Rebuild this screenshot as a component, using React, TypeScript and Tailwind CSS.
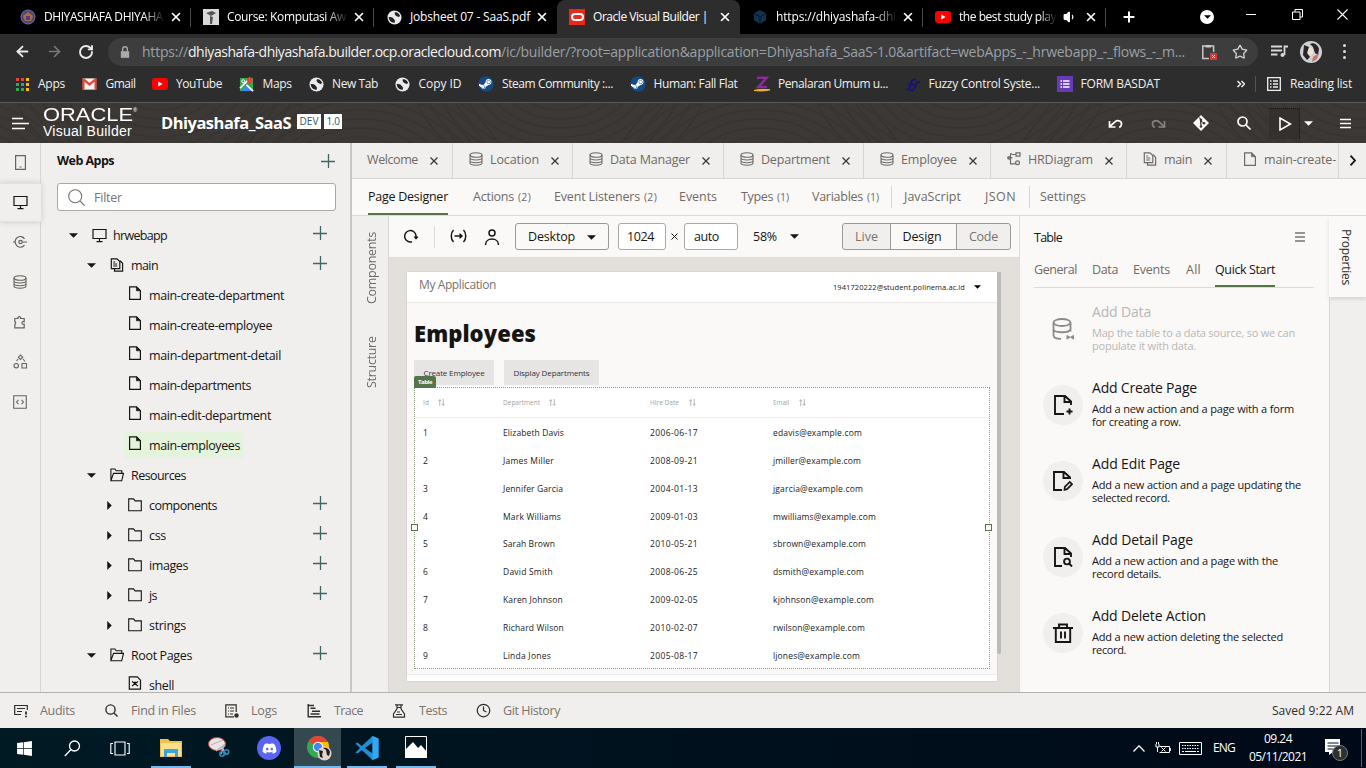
import { useLayoutEffect, useRef, type ReactNode } from 'react';
import { ArrowLeft, ArrowRight, RotateCw, Star, X, Plus, Clock, Volume1 } from 'lucide-react';
import { FaDiscord, FaWindows, FaSteam } from 'react-icons/fa';

/* Text run that spreads its letters so that it fills the given width. */
function T({ w, children, className = '', stretch = false }: { w?: number; children: ReactNode; className?: string; stretch?: boolean }) {
  const ref = useRef<HTMLSpanElement>(null);
  useLayoutEffect(() => {
    const el = ref.current;
    if (!el || !w) return;
    const natural = el.getBoundingClientRect().width;
    const n = (el.textContent || '').length;
    if (stretch) el.style.transform = `scaleX(${w / natural})`;
    else el.style.letterSpacing = `${(w - natural) / n}px`;
  }, [w, stretch]);
  return (
    <span className={`block shrink-0 whitespace-pre ${className}`} style={w ? { width: w } : undefined}>
      <span ref={ref} className="inline-block origin-left">{children}</span>
    </span>
  );
}

type IP = { className?: string };
const Svg = ({ children, className = '', vb = '0 0 16 16', sw = 1.2 }: { children: ReactNode; className?: string; vb?: string; sw?: number }) => (
  <svg viewBox={vb} className={`shrink-0 ${className}`} fill="none" stroke="currentColor" strokeWidth={sw}>{children}</svg>
);
const PageIcon = ({ className = 'size-[14px]' }: IP) => (
  <Svg className={className} vb="0 0 14 14"><path d="M1.600.8h7l3.800 3.900v8.600H1.600z" /><path d="M8.400.8v4h4z" fill="currentColor" strokeWidth=".6" /></Svg>
);
const FlowIcon = ({ className = 'size-[14px]' }: IP) => (
  <Svg className={className} vb="0 0 14 14"><path d="M1.300.8h5.700L9.800 3.600v7H1.300zM3.200 4h2M3.200 6h4M3.200 8h4" /><path d="M10 2.800l2.600 2.500v7.900H4.500v-2.400" /></Svg>
);
const FolderIcon = ({ className = 'size-[14px]' }: IP) => (
  <Svg className={className} vb="0 0 14 14" sw={1.1}><path d="M.7 12.800V.9h4.800l1.600 2h6.200v9.900z" /></Svg>
);
const FolderOpen = ({ className = 'size-[14px]' }: IP) => (
  <Svg className={className} vb="0 0 14 14" sw={1.1}><path d="M.9 12.600V1h4l1.300 1.800h5.600v2.400M.9 12.800l2.600-7.400h10l-1.800 7.400z" /></Svg>
);
const ShellIcon = ({ className = 'size-[14px]' }: IP) => (
  <Svg className={className} vb="0 0 14 14"><path d="M1.300.8h8l3.200 3.400v9H1.300z" /><path d="M4 5.500l6 4.500M10 5.500L4 10M7 5.500v2.500" strokeWidth="1.200" /></Svg>
);
const MonitorIcon = ({ className = 'size-[15px]' }: IP) => (
  <Svg className={className} vb="0 0 15 15"><path d="M1 1.500h13v9H1zM4.500 13.600h6M7.500 10.500v3" /></Svg>
);
const DbIcon = ({ className = 'size-[14px]' }: IP) => (
  <Svg className={className} vb="0 0 14 14" sw={1.1}><ellipse cx="7" cy="3" rx="6" ry="2.300" /><path d="M1 3v8c0 3 12 3 12 0V3M1 5.800c0 2.900 12 2.900 12 0M1 8.500c0 2.900 12 2.900 12 0" /></Svg>
);
const DiagramIcon = ({ className = 'size-[14px]' }: IP) => (
  <Svg className={className} vb="0 0 14 14"><path d="M5 1.800H3.500v10H6M1 5.800h4.500M9 .8h4v3.400H9zM5 2.500h4" /><circle cx="2" cy="5.800" r="1.300" /><circle cx="10.500" cy="10.700" r="1.900" /><path d="M6 11.800h2.600" /></Svg>
);
const CaretDown = ({ className = 'h-[5px] w-[9px]' }: IP) => (
  <svg viewBox="0 0 10 5" className={`shrink-0 fill-current ${className}`}><path d="M0 0h10L5 5z" /></svg>
);
const CaretRight = () => <svg viewBox="0 0 5 10" className="h-[9px] w-[5px] shrink-0 fill-current"><path d="M0 0v10l5-5z" /></svg>;
const PlusIcon = ({ className = '' }: IP) => (
  <Svg className={`size-[14px] text-[#3f6663] ${className}`} vb="0 0 14 14" sw={1.3}><path d="M7.500 0v14M0 7.500h14" /></Svg>
);
const YouTube = () => <svg viewBox="0 0 16 12" className="h-[12px] w-[16px]"><rect width="16" height="12" rx="3" fill="#f00" /><path d="M6.300 3.500v5L10.600 6z" fill="#fff" /></svg>;
const GlobeIcon = () => (
  <svg viewBox="0 0 16 16" className="size-[15px]"><circle cx="8" cy="8" r="7.500" fill="#e8eaed" /><path d="M1.800 7.500c3-.5 4.200.3 5.200 1.800 1 1.400 2 1.500 1.200 4.200C5 14 2 11.500 1.800 7.500zM8.500 2.500c2-.8 5 1.500 5.500 4-1.500 1.800-3 .2-4-.2C8.500 5.500 7.500 4 8.500 2.500z" fill="#222" /></svg>
);

function Tab({ icon, title, w, active, sep, audio, fade }: { icon: ReactNode; title: string; w: number; active?: boolean; sep?: boolean; audio?: boolean; fade?: boolean }) {
  return (
    <div className={`relative flex h-[34px] w-[183px] shrink-0 items-center pl-[12px] text-white ${active ? 'rounded-t-[8px] bg-[#2d2d2d]' : ''}`}>
      <div className="flex size-4 shrink-0 items-center justify-center">{icon}</div>
      <div className={`ml-2 ${audio ? 'w-[98px]' : 'w-[121px]'} ${fade ? '[mask-image:linear-gradient(to_right,black_82%,transparent)]' : ''}`}>
        <T w={w} className="text-[12px] leading-[18px]">{title}</T>
      </div>
      {audio && <Volume1 className="ml-[6px] size-[14px] fill-white" />}
      <X className={`size-[14px] shrink-0 ${audio ? 'ml-[7px]' : 'ml-[4px]'}`} strokeWidth={2.8} />
      {sep && <div className="absolute top-[8px] right-0 h-[19px] w-px bg-[#4a4a4a]" />}
    </div>
  );
}

function SteamIcon() {
  return (
    <div className="flex size-4 items-center justify-center rounded-full bg-radial from-white from-60% to-transparent to-62%">
      <FaSteam className="size-[16px] shrink-0 text-[#134a86]" />
    </div>
  );
}

const bookmarks: { t: string; w: number; i: ReactNode }[] = [
  { t: 'Apps', w: 27, i: (
    <div className="grid grid-cols-3 gap-[2px]">
      <i className="size-[3px] bg-[#ea4335]" /><i className="size-[3px] bg-[#ea4335]" /><i className="size-[3px] bg-[#fbbc04]" />
      <i className="size-[3px] bg-[#34a853]" /><i className="size-[3px] bg-[#4285f4]" /><i className="size-[3px] bg-[#fbbc04]" />
      <i className="size-[3px] bg-[#34a853]" /><i className="size-[3px] bg-[#34a853]" /><i className="size-[3px] bg-[#fbbc04]" />
    </div>) },
  { t: 'Gmail', w: 30, i: <svg viewBox="0 0 16 12" className="h-[12px] w-[15px]"><path d="M1 0h14v12H1z" fill="#f2f2f2" /><path d="M1.500 12V1L8 6.500 14.500 1v11" fill="none" stroke="#dd4b3e" strokeWidth="2.400" /></svg> },
  { t: 'YouTube', w: 46, i: <YouTube /> },
  { t: 'Maps', w: 29, i: <svg viewBox="0 0 16 16" className="size-[15px]"><path d="M1 1h14v14H1z" fill="#34a853" /><path d="M2 15l6-6 6 6z" fill="#4285f4" /><path d="M1 12l11-11M8 8.500l7 6.500" stroke="#fff" strokeWidth="1.800" /><path d="M11.500 9c0-2-3-3-3-5.500a3 3 0 016 0c0 2.500-3 3.500-3 5.500z" fill="#ea4335" /><circle cx="4.500" cy="4.500" r="1.600" fill="none" stroke="#fff" /></svg> },
  { t: 'New Tab', w: 46, i: <GlobeIcon /> },
  { t: 'Copy ID', w: 43, i: <GlobeIcon /> },
  { t: 'Steam Community :...', w: 111, i: <SteamIcon /> },
  { t: 'Human: Fall Flat', w: 84, i: <SteamIcon /> },
  { t: 'Penalaran Umum u...', w: 110, i: <svg viewBox="0 0 16 16" className="size-[16px]"><path d="M3 1.800h9.500L4.500 11H13" fill="none" stroke="#8e2a9b" strokeWidth="2.600" /><path d="M0 14.500c5-1.500 10-1 16-.8-5 1.500-10 1.500-16 .8z" fill="#f5b921" stroke="#f5b921" /></svg> },
  { t: 'Fuzzy Control Syste...', w: 111.5, i: <svg viewBox="0 0 16 16" className="size-[16px]" fill="none" stroke="#15107c" strokeWidth="1.700"><path d="M1 13.500c5 1 4-5 5.500-8C7.500 3.500 9 3 11 3.500M5 14.500c5 1 5-4 6-6.500.8-2 2-2.500 4-2M2.500 8.500h7" /></svg> },
  { t: 'FORM BASDAT', w: 79.5, i: <svg viewBox="0 0 16 16" className="size-[16px]"><path d="M0 0h16v16H0z" fill="#673ab7" /><path d="M3.500 5h1.500M6 5h6.500M3.500 8h1.500M6 8h6.500M3.500 11h1.500M6 11h6.500" stroke="#fff" strokeWidth="1.500" /></svg> },
];

type Node = { t: string; w: number; lvl: number; icon: ReactNode; open?: boolean; leaf?: boolean; plus?: boolean; sel?: boolean };
const tree: Node[] = [
  { t: 'hrwebapp', w: 54, lvl: 0, icon: <MonitorIcon />, open: true, plus: true },
  { t: 'main', w: 27, lvl: 1, icon: <FlowIcon />, open: true, plus: true },
  { t: 'main-create-department', w: 135, lvl: 2, icon: <PageIcon />, leaf: true },
  { t: 'main-create-employee', w: 123, lvl: 2, icon: <PageIcon />, leaf: true },
  { t: 'main-department-detail', w: 132, lvl: 2, icon: <PageIcon />, leaf: true },
  { t: 'main-departments', w: 102, lvl: 2, icon: <PageIcon />, leaf: true },
  { t: 'main-edit-department', w: 122, lvl: 2, icon: <PageIcon />, leaf: true },
  { t: 'main-employees', w: 91, lvl: 2, icon: <PageIcon />, leaf: true, sel: true },
  { t: 'Resources', w: 55, lvl: 1, icon: <FolderOpen />, open: true },
  { t: 'components', w: 68, lvl: 2, icon: <FolderIcon />, plus: true },
  { t: 'css', w: 17, lvl: 2, icon: <FolderIcon />, plus: true },
  { t: 'images', w: 39, lvl: 2, icon: <FolderIcon />, plus: true },
  { t: 'js', w: 8, lvl: 2, icon: <FolderIcon />, plus: true },
  { t: 'strings', w: 37, lvl: 2, icon: <FolderIcon /> },
  { t: 'Root Pages', w: 61, lvl: 1, icon: <FolderOpen />, open: true, plus: true },
  { t: 'shell', w: 25, lvl: 2, icon: <ShellIcon />, leaf: true },
];

function TreeRow({ n }: { n: Node }) {
  const pad = n.lvl === 0 ? 'pl-[23px]' : n.lvl === 1 ? 'pl-[41px]' : 'pl-[59px]';
  return (
    <div className={`flex h-[30px] shrink-0 items-center ${pad} pr-[23px] text-[#161513]`}>
      <div className="flex w-[18px] shrink-0 justify-center">{n.leaf ? null : n.open ? <CaretDown /> : <CaretRight />}</div>
      <div className={`ml-[6px] flex h-[26px] items-center rounded-[3px] pr-[4px] pl-[4px] ${n.sel ? 'bg-[#e4f3db]' : ''}`}>
        <div className={`flex w-[21px] ${n.leaf ? '-mt-[4px]' : ''}`}>{n.icon}</div>
        <T w={n.w} className="mt-[2px] text-[12.500px] leading-[18px]">{n.t}</T>
      </div>
      {n.plus && <PlusIcon className="-mt-[4px] ml-auto" />}
    </div>
  );
}

const editorTabs: { t: string; w: number; box: string; icon?: ReactNode }[] = [
  { t: 'Welcome', w: 51, box: 'w-[101px] pl-[15px]' },
  { t: 'Location', w: 49, box: 'w-[120px] pl-[16px]', icon: <DbIcon /> },
  { t: 'Data Manager', w: 80, box: 'w-[151px] pl-[16px]', icon: <DbIcon /> },
  { t: 'Department', w: 69, box: 'w-[140px] pl-[16px]', icon: <DbIcon /> },
  { t: 'Employee', w: 56, box: 'w-[127px] pl-[16px]', icon: <DbIcon /> },
  { t: 'HRDiagram', w: 65, box: 'w-[136px] pl-[16px]', icon: <DiagramIcon /> },
  { t: 'main', w: 28, box: 'w-[100px] pl-[16px]', icon: <FlowIcon /> },
];

const rows = [
  ['1', 'Elizabeth Davis', 61, '2006-06-17', 'edavis@example.com', 89],
  ['2', 'James Miller', 51, '2008-09-21', 'jmiller@example.com', 88],
  ['3', 'Jennifer Garcia', 60, '2004-01-13', 'jgarcia@example.com', 90],
  ['4', 'Mark Williams', 58, '2009-01-03', 'mwilliams@example.com', 103],
  ['5', 'Sarah Brown', 52, '2010-05-21', 'sbrown@example.com', 93],
  ['6', 'David Smith', 50, '2008-06-25', 'dsmith@example.com', 91],
  ['7', 'Karen Johnson', 60, '2009-02-05', 'kjohnson@example.com', 101],
  ['8', 'Richard Wilson', 61, '2010-02-07', 'rwilson@example.com', 92],
  ['9', 'Linda Jones', 48, '2005-08-17', 'ljones@example.com', 87],
] as const;

const quick: { t: string; w: number; a: string; aw: number; b: string; bw: number; icon: ReactNode; off?: boolean }[] = [
  { t: 'Add Data', w: 59, a: 'Map the table to a data source, so we can', aw: 203, b: 'populate it with data.', bw: 104, off: true,
    icon: <Svg className="size-[22px]" vb="0 0 22 22" sw={1.800}><ellipse cx="10" cy="4.500" rx="8.500" ry="3.500" /><path d="M1.500 4.500v13c0 2 3 3.300 7.500 3.300M18.500 4.500v9M1.500 11c0 4 15 4.500 17 .5" /><path d="M15 17.500v3.500l3-1.800zM21.500 17.500v3.500l-3-1.800z" fill="currentColor" strokeWidth="1" /></Svg> },
  { t: 'Add Create Page', w: 105, a: 'Add a new action and a page with a form', aw: 202, b: 'for creating a row.', bw: 89,
    icon: <Svg className="size-[20px]" vb="0 0 20 20" sw={1.900}><path d="M11 19H2V1h10l6 5.500V10M11.500 1v6H18" /><path d="M16.500 13.500v6M13.500 16.500h6" /></Svg> },
  { t: 'Add Edit Page', w: 88, a: 'Add a new action and a page updating the', aw: 209, b: 'selected record.', bw: 78,
    icon: <Svg className="size-[20px]" vb="0 0 20 20" sw={1.900}><path d="M9 19H1V1h10l6 5.500V8M10.500 1v6H17" /><path d="M11.500 18.800l.3-2.800 5-5 2.200 2.200-5 5z" strokeWidth="1.700" /></Svg> },
  { t: 'Add Detail Page', w: 101, a: 'Add a new action and a page with the', aw: 186, b: 'record details.', bw: 69,
    icon: <Svg className="size-[20px]" vb="0 0 20 20" sw={1.900}><path d="M9 19H2V1h10l6 5.500V10M11.500 1v6H18" /><circle cx="14" cy="14.500" r="2.900" /><path d="M16 16.500l3 3" /></Svg> },
  { t: 'Add Delete Action', w: 114, a: 'Add a new action deleting the selected', aw: 191, b: 'record.', bw: 34,
    icon: <Svg className="size-[20px]" vb="0 0 20 20" sw={1.900}><path d="M0 5h20M6 5V1.500h8V5M2.800 5v14h14.400V5M8 8.500v7M12 8.500v7" /></Svg> },
];

const SubTab = ({ t, w, c, cw, className = '' }: { t: string; w: number; c?: string; cw?: number; className?: string }) => (
  <div className={`flex shrink-0 items-baseline text-[#6f6a65] ${className}`}>
    <T w={w} className="text-[12.500px]">{t}</T>
    {c && <T w={cw} className="ml-[4px] text-[10.500px]">{c}</T>}
  </div>
);
const Sort = () => (
  <Svg className="size-[7px] text-[#a5a3a0]" vb="0 0 8 8" sw={0.9}><path d="M2 8V.8M.4 2.500L2 .8l1.500 1.700M6 0v7.200M4.400 5.500L6 7.200l1.500-1.700" /></Svg>
);
const head = 'text-[6.500px] text-[#a5a3a0]';

export default function App() {
  return (
    <div className="flex h-[768px] w-[1366px] flex-col overflow-hidden bg-[#f1efed] font-['Open_Sans','Noto_Sans',sans-serif]">
      {/* browser tabs */}
      <div className="flex h-[34px] shrink-0 bg-black pl-[8px]">
        <Tab sep fade w={119} title="DHIYASHAFA DHIYAHA" icon={<svg viewBox="0 0 16 16" className="size-4"><circle cx="8" cy="8" r="7" fill="#4b467d" stroke="#77709c" /><path d="M8 3l5 4-2 5H5L3 7z" fill="#b06d3c" /><path d="M6 7h4v4H6z" fill="#4b3d8d" /></svg>} />
        <Tab sep fade w={119} title="Course: Komputasi Aw" icon={<svg viewBox="0 0 16 16" className="size-4"><path d="M0 0h16v16H0z" fill="#d9d9d9" /><path d="M3 4l6-2 4 2-5 3zM7 7l3 1-1 7H7z" fill="#555" /></svg>} />
        <Tab w={120} title="Jobsheet 07 - SaaS.pdf" icon={<GlobeIcon />} />
        <Tab active w={115} title="Oracle Visual Builder |" icon={<div className="flex size-4 items-center justify-center bg-[#e8291c]"><div className="h-[8px] w-[13px] rounded-full border-2 border-white" /></div>} />
        <Tab sep fade w={120} title="https://dhiyashafa-dhi" icon={<svg viewBox="0 0 16 16" className="size-4"><path d="M8 1l6 3.300v7L8 15l-6-3.700v-7z" fill="#12324f" /><path d="M2.500 4.500L8 8l5.500-3.500M8 8v7" stroke="#061422" fill="none" /></svg>} />
        <Tab sep audio fade w={97} title="the best study play" icon={<YouTube />} />
        <Plus className="mt-[9px] ml-[15px] size-[16px] text-white" strokeWidth={3} />
        <div className="mt-[10px] ml-[63px] flex size-[14px] items-center justify-center rounded-full bg-white"><CaretDown className="h-[4px] w-[7px] text-black" /></div>
        <div className="mt-[14px] ml-[32px] h-px w-[10px] bg-white" />
        <Svg className="mt-[9px] ml-[36px] size-[11px] text-white" vb="0 0 11 11" sw={1}><path d="M.5 3h7.500v7.500H.5zM3 3V.5h7.500V8H8" /></Svg>
        <Svg className="mt-[9px] ml-[34px] size-[11px] text-white" vb="0 0 11 11" sw={1.100}><path d="M.5.5l10 10M10.500.5l-10 10" /></Svg>
      </div>
      {/* address bar */}
      <div className="flex h-[35px] shrink-0 items-center bg-[#2d2d2d] pl-[14px] text-[#e8eaed]">
        <ArrowLeft className="size-[17px]" strokeWidth={2.600} />
        <ArrowRight className="ml-[15px] size-[17px] text-[#7a7a7a]" strokeWidth={2.300} />
        <RotateCw className="ml-[15px] size-[16px]" strokeWidth={2.800} />
        <div className="ml-[14px] flex h-[28px] w-[1150px] items-center rounded-full bg-[#3d3d3d] pr-[10px] pl-[12px]">
          <svg viewBox="0 0 12 14" className="h-[12px] w-[10px] shrink-0"><path d="M1 6h10v8H1z" fill="#aaa" /><path d="M3.200 6V3.500a2.800 2.800 0 015.600 0V6" fill="none" stroke="#aaa" strokeWidth="1.600" /></svg>
          <T w={46} className="ml-[12px] text-[14px] text-[#9aa0a6]">https://</T>
          <T w={313} className="text-[14px] text-[#f2f2f2]">dhiyashafa-dhiyashafa.builder.ocp.oraclecloud.com</T>
          <T w={684} className="text-[14px] text-[#9aa0a6]">/ic/builder/?root=application&amp;application=Dhiyashafa_SaaS-1.0&amp;artifact=webApps_-_hrwebapp_-_flows_-_m...</T>
          <Svg className="ml-[16px] size-[16px] text-[#c8c8c8]" vb="0 0 16 16" sw={1.500}><path d="M8 14.500H1.800V2h10.800v6" /><path d="M4.500 1h5.500v2.500H4.500z" fill="currentColor" stroke="none" /><path d="M9 9h7v7H9z" fill="#d93636" stroke="none" /><path d="M11 11l3 3M14 11l-3 3" stroke="#fff" strokeWidth="1" /></Svg>
          <Star className="ml-[15px] size-[16px] text-[#d0d0d0]" strokeWidth={2} />
        </div>
        <Svg className="ml-[13px] size-[17px] text-[#d8d8d8]" vb="0 0 17 17" sw={1.800}><path d="M0 3.500h11M0 7.500h11M0 11.500h6.500M13.500 12V3.500H17" /><circle cx="11.500" cy="12" r="2" fill="currentColor" stroke="none" /></Svg>
        <svg viewBox="0 0 22 22" className="ml-[12px] size-[22px] shrink-0"><circle cx="11" cy="11" r="11" fill="#cfd0d3" /><path d="M4 4l5 2-2 6 3 4-3 3-4-5zM10 3c4-2 8 1 9 5l-1 6-3-2-2-6z" fill="#2b2326" /><path d="M9 7c3-1 5 1 4 5l-2 3-3-3z" fill="#f3ded8" /><path d="M13 16l6-4-2 6-5 3z" fill="#c9775f" /></svg>
        <div className="ml-[21px] flex flex-col gap-[3px]"><i className="size-[3px] rounded-full bg-[#ddd]" /><i className="size-[3px] rounded-full bg-[#ddd]" /><i className="size-[3px] rounded-full bg-[#ddd]" /></div>
      </div>
      {/* bookmarks */}
      <div className="flex h-[34px] shrink-0 items-center border-b border-[#5a5a5a] bg-[#2d2d2d] pb-[3px] pl-[14px] text-[#f0f0f0]">
        <div className="flex w-[1147px] gap-[16.500px]">
          {bookmarks.map((b) => (
            <div key={b.t} className="flex shrink-0 items-center gap-2">
              <div className="flex size-4 shrink-0 items-center justify-center">{b.i}</div>
              <T w={b.w} className="text-[12px] leading-[18px]">{b.t}</T>
            </div>
          ))}
        </div>
        <Svg className="ml-[76px] size-[8px]" vb="0 0 8 8" sw={1.500}><path d="M.5 1l3 3-3 3M4.500 1l3 3-3 3" /></Svg>
        <div className="ml-[10px] h-[16px] w-px bg-[#555]" />
        <Svg className="ml-[11px] size-[14px]" vb="0 0 14 14" sw={1.300}><path d="M.7.7h12.600v12.600H.7zM3 4h1.500M6 4h5M3 7h1.500M6 7h5M3 10h1.500M6 10h5" /></Svg>
        <T w={62} className="ml-[9px] text-[12px]">Reading list</T>
      </div>
      {/* app header */}
      <div className="relative flex h-[40px] shrink-0 items-center overflow-hidden bg-[#3c3835] text-white">
        <svg className="absolute inset-0 h-[40px] w-[1366px]" fill="none" stroke="#2f2b28" strokeWidth="1.500" opacity=".35">
          {[0, 1, 2, 3, 4, 5, 6, 7].map((g) =>
            Array.from({ length: 11 }, (_, i) => (
              <ellipse key={`${g}-${i}`} cx={-40 + g * 200} cy={g % 2 ? -35 : 85} rx={30 + i * 12} ry={24 + i * 9} />
            )),
          )}
        </svg>
        <div className="relative flex w-full items-center">
          <Svg className="ml-[12px] size-[17px]" vb="0 0 17 17" sw={1.700}><path d="M0 3.500h11M0 8.500h17M0 13.500h13" /></Svg>
          <div className="ml-[14px] w-[94px]">
            <div className="flex"><T w={90} stretch className="font-['Liberation_Sans'] text-[18.500px] leading-[16px]">ORACLE</T><span className="text-[5px] leading-[6px]">®</span></div>
            <T w={89} className="mt-px font-['Liberation_Sans'] text-[14px] leading-[15px]">Visual Builder</T>
          </div>
          <T w={130} className="ml-[24px] text-[16.500px] font-bold">Dhiyashafa_SaaS</T>
          <div className="-mt-[3px] ml-[6px] flex h-[15px] w-[24px] items-center justify-center bg-white text-[#2c5967]"><T w={19} className="text-[10px]">DEV</T></div>
          <div className="-mt-[3px] ml-[3px] flex h-[15px] w-[18px] items-center justify-center bg-white text-[#2c5967]"><T w={13} className="text-[10px]">1.0</T></div>
          <div className="ml-auto flex items-center">
            <Svg className="size-[15px]" vb="0 0 15 15" sw={1.700}><path d="M1.500 5v6h6M1.800 10.500L7 5.800c3-2.600 7-.5 6.500 2.500-.2 1.500-1 2.400-2.300 3.200" /></Svg>
            <Svg className="ml-[28px] size-[15px] text-[#8a8683]" vb="0 0 15 15" sw={1.600}><path d="M13.500 5v6h-6M13.200 10.500L8 5.800c-3-2.600-7-.5-6.500 2.500.2 1.500 1 2.400 2.300 3.200" /></Svg>
            <svg viewBox="0 0 16 16" className="ml-[27px] size-[16px]"><path d="M8 0l8 8-8 8-8-8z" fill="#fff" /><path d="M6.500 2.500l1.500 2v7M8 6l2.800 2" stroke="#3c3834" /><g fill="#3c3834"><circle cx="8" cy="5" r="1.300" /><circle cx="8" cy="11.500" r="1.300" /><circle cx="11" cy="8.200" r="1.300" /></g></svg>
            <Svg className="ml-[28px] size-[14px]" vb="0 0 14 14" sw={1.700}><circle cx="5.500" cy="5.500" r="4.500" /><path d="M9 9l4.500 4.500" /></Svg>
            <div className="ml-[18px] flex h-[31px] w-[31px] items-center justify-center border-t border-r border-dotted border-[#111] bg-[#33302d]">
              <Svg className="ml-[2px] size-[14px]" vb="0 0 14 14" sw={1.600}><path d="M2 1v12l10.500-6z" /></Svg>
            </div>
            <CaretDown className="ml-[4px] h-[5px] w-[9px]" />
            <Svg className="mr-[15px] ml-[27px] size-[11px]" vb="0 0 11 11" sw={1.700}><path d="M0 1.500h11M0 5.500h11M0 9.500h11" /></Svg>
          </div>
        </div>
      </div>

      {/* workspace */}
      <div className="flex h-[549px] shrink-0 overflow-hidden">
        <div className="flex w-[41px] shrink-0 flex-col border-r border-[#d8d6d4] text-[#67625d]">
          <div className="flex h-[40px] items-center justify-center pb-[2px]"><Svg className="h-[15px] w-[11px]" vb="0 0 11 15"><path d="M.6.6h9.800v13.800H.6zM4.500 12h2" /></Svg></div>
          <div className="-mr-px flex h-[39px] items-center justify-center border-y border-[#e3e1df] bg-[#f1efed] pr-px pb-px text-[#161513] shadow-[0_0_6px_rgba(0,0,0,0.16)]"><MonitorIcon /></div>
          <div className="flex h-[40px] items-center justify-center"><Svg className="size-[14px]" vb="0 0 14 14"><circle cx="7.500" cy="7" r="1.700" /><path d="M9 7h5M11.500 3.800A5 5 0 103 9.500M11.500 10.200a5 5 0 01-8.500-.7M0 7h2.500" /></Svg></div>
          <div className="flex h-[40px] items-center justify-center"><DbIcon /></div>
          <div className="flex h-[40px] items-center justify-center"><Svg className="size-[14px]" vb="0 0 14 14"><path d="M1.800 3.500H5C4 1 8.500 1 7.600 3.500h3.600v3.200c-3-1-3 3.500 0 2.600v3.500H1.800V9.500c1.200-.2 1.200-2.500 0-2.700z" /></Svg></div>
          <div className="flex h-[40px] items-center justify-center pb-[2px]"><Svg className="size-[15px]" vb="0 0 15 15" sw={1.100}><path d="M7.500 1l2.200 2.200-2.200 2.200-2.200-2.200zM9 9.500h4.500V14H9zM3.500 7L5 5M10 5l2 2.500" /><circle cx="3.200" cy="11.700" r="2.200" /></Svg></div>
          <div className="flex h-[40px] items-center justify-center"><Svg className="size-[14px]" vb="0 0 14 14" sw={1.100}><path d="M.7.7h12.600v12.600H.7zM5.500 4.800L3.500 7l2 2.200M8.500 4.800l2 2.200-2 2.200" /></Svg></div>
        </div>
        <div className="flex w-[311px] shrink-0 flex-col overflow-hidden border-r-2 border-[#c9c7c5]">
          <div className="flex h-[36px] shrink-0 items-center pl-[16px]">
            <T w={57} className="text-[12.500px] font-bold text-[#161513]">Web Apps</T>
            <PlusIcon className="mr-[15px] ml-auto" />
          </div>
          <div className="mt-[4px] ml-[16px] flex h-[28px] w-[279px] shrink-0 items-center rounded-[3px] border border-[#aaa8a5] bg-white pl-[10px] text-[#77736f]">
            <Svg className="size-[17px]" vb="0 0 17 17" sw={1.100}><circle cx="7.200" cy="7.200" r="6.500" /><path d="M12 12l4.700 4.700" /></Svg>
            <T w={28} className="mt-[2px] ml-[9px] text-[12.500px]">Filter</T>
          </div>
          <div className="mt-[9px] flex flex-col">{tree.map((n) => <TreeRow key={n.t} n={n} />)}</div>
        </div>

        <div className="flex min-w-0 flex-1 flex-col">
          {/* editor tabs */}
          <div className="flex h-[36px] shrink-0 border-b border-[#d8d6d4]">
            {editorTabs.map((e) => (
              <div key={e.t} className={`flex h-[35px] shrink-0 items-center border-r border-[#d8d6d4] text-[#6f6a65] ${e.box}`}>
                {e.icon && <div className="mr-[7px] -mt-[3px] flex">{e.icon}</div>}
                <T w={e.w} className="text-[12.500px]">{e.t}</T>
                <Svg className="ml-[12px] size-[8px] text-[#3b3834]" vb="0 0 8 8" sw={1.300}><path d="M.5.5l7 7M7.500.5l-7 7" /></Svg>
              </div>
            ))}
            <div className="flex h-[35px] w-[112px] items-center border-r border-[#d8d6d4] pl-[16px] text-[#6f6a65]">
              <PageIcon className="-mt-[3px] size-[14px]" /><T w={72} className="ml-[7px] text-[12.500px]">main-create-</T>
            </div>
            <div className="flex flex-1 items-center justify-center text-[#161513]"><Svg className="h-[11px] w-[6px]" vb="0 0 6 11" sw={1.800}><path d="M.5.7l4.500 4.800L.5 10.300" /></Svg></div>
          </div>
          {/* artifact tabs */}
          <div className="flex h-[37px] shrink-0 items-center border-b border-[#dddbd9] bg-[#fbf9f8] pl-[16px]">
            <div className="flex h-[36px] w-[80px] items-center border-b-2 border-[#56734a] pt-[2px]"><T w={80} className="text-[12.500px] text-[#161513]">Page Designer</T></div>
            <SubTab className="ml-[25px]" t="Actions" w={41} c="(2)" cw={13} />
            <SubTab className="ml-[23px]" t="Event Listeners" w={86} c="(2)" cw={13} />
            <SubTab className="ml-[22px]" t="Events" w={38} />
            <SubTab className="ml-[24px]" t="Types" w={32} c="(1)" cw={12} />
            <SubTab className="ml-[23px]" t="Variables" w={51} c="(1)" cw={12} />
            <div className="ml-[12px] h-[22px] w-px bg-[#d8d6d4]" />
            <SubTab className="ml-[12px]" t="JavaScript" w={57} />
            <SubTab className="ml-[24px]" t="JSON" w={31} />
            <div className="ml-[13px] h-[22px] w-px bg-[#d8d6d4]" />
            <SubTab className="ml-[10px]" t="Settings" w={46} />
          </div>

          <div className="flex min-h-0 flex-1">
            <div className="flex w-[37px] shrink-0 flex-col items-center border-r border-[#d8d6d4] pt-[16px] pl-[4px] text-[12.500px] text-[#6f6a65]">
              <div className="flex h-[72px] rotate-180 items-center [writing-mode:vertical-rl]"><span className="tracking-[-0.300px]">Components</span></div>
              <div className="mt-[30px] flex h-[54px] rotate-180 items-center [writing-mode:vertical-rl]"><span className="tracking-[-0.300px]">Structure</span></div>
            </div>
            <div className="flex w-[630px] shrink-0 flex-col">
              <div className="flex h-[42px] shrink-0 items-center border-b border-[#dedbd7] bg-[#fbf9f8] pl-[14px] text-[#161513]">
                <Svg className="size-[15px]" vb="0 0 15 15" sw={1.500}><path d="M9 12.700a5.700 5.700 0 114-6v2" /><path d="M10.500 7.500h5l-2.500 3.200z" fill="currentColor" stroke="none" /></Svg>
                <div className="ml-[16px] h-[22px] w-px bg-[#dddbd9]" />
                <Svg className="ml-[15px] size-[17px]" vb="0 0 17 17" sw={1.500}><path d="M3.500 2C.5 5 .5 11 3.500 14M13.500 2c3 3 3 9 0 12M4.500 8h7M9.500 5.800L12 8l-2.500 2.200" /></Svg>
                <Svg className="ml-[17px] size-[16px]" vb="0 0 16 16" sw={1.500}><circle cx="8" cy="4" r="3" /><path d="M1.500 16c0-8 13-8 13 0" /></Svg>
                <div className="ml-[15px] flex h-[27px] w-[94px] items-center rounded-[3px] border border-[#9b9895] bg-[#fbf9f8] pt-px pl-[12px]"><T w={47} className="text-[12.500px] font-medium">Desktop</T><CaretDown className="ml-[12px] h-[5px] w-[9px]" /></div>
                <div className="ml-[9px] flex h-[27px] w-[48px] items-center rounded-[3px] border border-[#aaa8a5] bg-white pt-[2px] pl-[8px]"><T w={27} className="text-[12.500px]">1024</T></div>
                <Svg className="ml-[5px] size-[7px]" vb="0 0 7 7" sw={1}><path d="M.5.5l6 6M6.500.5l-6 6" /></Svg>
                <div className="ml-[6px] flex h-[27px] w-[54px] items-center rounded-[3px] border border-[#aaa8a5] bg-white pt-[2px] pl-[9px]"><T w={25} className="text-[12.500px]">auto</T></div>
                <T w={24} className="mt-px ml-[15px] text-[12.500px]">58%</T><CaretDown className="ml-[13px] h-[5px] w-[9px]" />
                <div className="ml-[43px] flex h-[27px] w-[169px] items-center rounded-[3px] border border-[#9b9895] bg-[#f1efed] text-[#77736f]">
                  <div className="flex h-full w-[47px] items-center justify-center pt-px"><T w={23} className="text-[12.500px]">Live</T></div>
                  <div className="flex h-full w-[67px] items-center justify-center border-x border-[#9b9895] bg-[#fbf9f8] pt-px pr-[3px] text-[#161513]"><T w={39} className="text-[12.500px] font-medium">Design</T></div>
                  <div className="flex h-full flex-1 items-center justify-center pt-px"><T w={29} className="text-[12.500px]">Code</T></div>
                </div>
              </div>
              {/* canvas */}
              <div className="flex flex-1 bg-[#e3e0dc] pt-[14px] pl-[18px]">
                <div className="flex h-[409px] w-[590px] flex-col bg-[#fbf9f8] shadow-[0_0_1px_rgba(0,0,0,0.25)]">
                  <div className="flex h-[31px] shrink-0 items-center border-b border-[#e9e7e5] bg-white pb-[3px] pl-[12px]">
                    <T w={77} className="-mt-[2px] text-[12px] text-[#77736f]">My Application</T>
                    <T w={132} className="mt-[5px] ml-auto text-[7.500px] font-medium text-[#222]">1941720222@student.polinema.ac.id</T>
                    <CaretDown className="mt-[2px] mr-[16px] ml-[9px] h-[4px] w-[7px]" />
                  </div>
                  <T w={122} className="mt-[15px] ml-[7px] text-[22px] leading-[30px] font-extrabold text-[#161513]">Employees</T>
                  <div className="mt-[12px] ml-[7px] flex h-[25px] shrink-0 gap-[10px] text-[8px] font-medium text-[#333]">
                    <div className="flex w-[80px] items-center justify-center bg-[#e7e5e4] pt-px"><T w={61}>Create Employee</T></div>
                    <div className="flex w-[95px] items-center justify-center bg-[#e7e5e4] pt-px"><T w={76}>Display Departments</T></div>
                  </div>
                  <div className="relative mt-[2px] ml-[7px] flex h-[282px] w-[576px] shrink-0 flex-col border border-dotted border-[#8b9a84] bg-white">
                    <div className="absolute -top-[12px] -left-px flex h-[12px] w-[22px] items-center justify-center rounded-t-[2px] bg-[#56734a] text-white"><T w={14} className="text-[6px] font-bold">Table</T></div>
                    <div className="absolute top-[136px] -left-[4px] size-[7px] border border-[#56734a] bg-white" />
                    <div className="absolute top-[136px] -right-[3px] size-[7px] border border-[#56734a] bg-white" />
                    <div className="grid h-[30px] shrink-0 grid-cols-[80px_147px_123px_1fr] items-center border-b border-[#ededed] pl-[8px]">
                      <div className="flex items-center"><T w={6} className={head}>Id</T><div className="ml-[9px]"><Sort /></div></div>
                      <div className="flex items-center"><T w={37} className={head}>Department</T><div className="ml-[9px]"><Sort /></div></div>
                      <div className="flex items-center"><T w={29} className={head}>Hire Date</T><div className="ml-[10px]"><Sort /></div></div>
                      <div className="flex items-center"><T w={16} className={head}>Email</T><div className="ml-[10px]"><Sort /></div></div>
                    </div>
                    {rows.map((r) => (
                      <div key={r[0]} className="grid h-[27.870px] shrink-0 grid-cols-[80px_147px_123px_1fr] items-center pt-[3px] pl-[8px] text-[8.500px] text-[#222]">
                        <span>{r[0]}</span><T w={r[2]}>{r[1]}</T><T w={48}>{r[3]}</T><T w={r[5]}>{r[4]}</T>
                      </div>
                    ))}
                  </div>
                  <div className="mt-auto h-[7px] border-t border-[#ececea] bg-white" />
                </div>
                <div className="h-[382px] w-[4px] rounded-b-[2px] bg-[#bdbbb9]" />
              </div>
            </div>
            {/* properties */}
            <div className="flex w-[310px] shrink-0 flex-col border-l border-[#dddbd9] bg-[#fbf9f8] pl-[14px]">
              <div className="flex h-[42px] shrink-0 items-center">
                <T w={28} className="mt-[2px] text-[12.500px] text-[#161513]">Table</T>
                <Svg className="mr-[24px] ml-auto size-[10px] text-[#77736f]" vb="0 0 10 10" sw={1.500}><path d="M0 1h10M0 5h10M0 9h10" /></Svg>
              </div>
              <div className="flex h-[30px] w-[280px] shrink-0 border-b border-[#dddbd9] text-[12.500px] leading-[24px] text-[#6f6a65]">
                <T w={43}>General</T><T w={26} className="ml-[15px]">Data</T><T w={37} className="ml-[15px]">Events</T><T w={15} className="ml-[16px]">All</T>
                <T w={60} className="ml-[14px] h-[29px] border-b-2 border-[#56734a] text-[#161513]">Quick Start</T>
              </div>
              <div className="flex flex-col pt-[14px]">
                {quick.map((q) => (
                  <div key={q.t} className={`flex h-[76px] shrink-0 ${q.off ? 'text-[#b9b7b5]' : 'text-[#161513]'}`}>
                    <div className={`mt-[7px] ml-[9px] flex size-[40px] shrink-0 items-center justify-center rounded-full ${q.off ? 'text-[#8c8a88]' : 'bg-[#f1efed]'}`}>{q.icon}</div>
                    <div className="ml-[9px]">
                      <T w={q.w} className="text-[14px] leading-[20px]">{q.t}</T>
                      <T w={q.aw} className="mt-[4px] text-[11px] leading-[13px]">{q.a}</T>
                      <T w={q.bw} className="text-[11px] leading-[13px]">{q.b}</T>
                    </div>
                  </div>
                ))}
              </div>
            </div>
            <div className="flex flex-1 flex-col">
              <div className="flex h-[81px] justify-center bg-[#fbf9f8] pt-[13px] pr-[4px] text-[12px] text-[#312d2a] shadow-[0_2px_4px_rgba(0,0,0,0.12)]"><span className="tracking-[-0.200px] [writing-mode:vertical-rl]">Properties</span></div>
              <div className="flex-1 border-l border-[#d8d6d4]" />
            </div>
          </div>
        </div>
      </div>

      {/* status bar */}
      <div className="flex h-[36px] shrink-0 items-center border-t border-[#b5b3b1] bg-[#f1efed] pl-[14px] text-[12.500px] text-[#77736f]">
        <Svg className="size-[14px] text-[#312d2a]" vb="0 0 14 14"><path d="M7 10.500H.7V1.500h12.600V6M3 4.500h8M3 7.500h5" /><path d="M12 7.500v3" strokeWidth="1.800" /><circle cx="12" cy="12.500" r="1" fill="currentColor" stroke="none" /></Svg>
        <T w={35} className="mt-[2px] ml-[12px]">Audits</T>
        <Svg className="ml-[30px] size-[13px] text-[#312d2a]" vb="0 0 13 13" sw={1.400}><circle cx="5.500" cy="5.500" r="4.600" /><path d="M9 9l3.500 3.500" /></Svg>
        <T w={65} className="mt-[2px] ml-[13px]">Find in Files</T>
        <Svg className="ml-[29px] size-[14px] text-[#312d2a]" vb="0 0 14 14"><path d="M9 12.800H.8V.8h10.400V8M3 4h1M5 4h4M3 7h1M5 7h4M3 10h1M5 10h3" /><circle cx="11.500" cy="11.500" r="2.200" fill="currentColor" stroke="none" /></Svg>
        <T w={26} className="mt-[2px] ml-[12px]">Logs</T>
        <Svg className="ml-[30px] size-[14px] text-[#312d2a]" vb="0 0 14 14" sw={1.400}><path d="M1.200 0v12.800H14M1 1.500h6M3.500 4.300h5M5 7.200h8M3.500 10h9" /></Svg>
        <T w={29} className="mt-[2px] ml-[13px]">Trace</T>
        <Svg className="ml-[29px] size-[14px] text-[#312d2a]" vb="0 0 14 14"><path d="M3 .8h8M5 .8v4L1.500 10v3.200h11V10L9 4.800v-4M4.500 3.500h5M4 10.500h6M5 8h3" /></Svg>
        <T w={28} className="mt-[2px] ml-[13px]">Tests</T>
        <Clock className="ml-[29px] size-[15px] text-[#312d2a]" strokeWidth={2} />
        <T w={57} className="mt-[2px] ml-[12px]">Git History</T>
        <T w={82} className="mt-px mr-[12px] ml-auto text-[12px] text-[#312d2a]">Saved 9:22 AM</T>
      </div>

      {/* taskbar */}
      <div className="flex h-[40px] shrink-0 bg-linear-to-r from-[#001a24] to-[#000918] text-white">
        <div className="flex w-[48px] items-center justify-center"><FaWindows className="size-[17px]" /></div>
        <div className="flex w-[48px] items-center justify-center"><Svg className="size-[17px]" vb="0 0 17 17" sw={1.300}><circle cx="10.500" cy="6" r="5" /><path d="M7 9.500L.8 16" /></Svg></div>
        <div className="flex w-[48px] items-center justify-center"><Svg className="h-[15px] w-[20px]" vb="0 0 20 15" sw={1.100}><path d="M5 1h10v13H5zM3 2.500H.8v10H3M17 2.500h2.200v10H17" /></Svg></div>
        <div className="mr-[3px] ml-[7px] flex w-[40px] items-center justify-center border-b-2 border-[#76b9ed] pt-[2px]"><svg viewBox="0 0 22 18" className="h-[18px] w-[22px]"><path d="M0 0h8l2 2h12v16H0z" fill="#f0c04a" /><path d="M1 4h20v13H1z" fill="#fde18a" /><path d="M4 10h14v8h-3v-4H7v4H4z" fill="#3da2dd" /></svg></div>
        <div className="flex w-[50px] items-center justify-center"><svg viewBox="0 0 22 22" className="size-[22px]"><ellipse cx="9" cy="7" rx="8.500" ry="6.500" fill="#e9e5e5" stroke="#c23b35" /><path d="M3 8l12-5" stroke="#b9b0b0" /><path d="M8 14l8-6-3 9M14 10l4 8" stroke="#b4b9bd" strokeWidth="1.500" fill="none" /><circle cx="14" cy="17" r="2.200" fill="none" stroke="#2d8bbd" strokeWidth="1.600" /><circle cx="18.500" cy="15" r="2.200" fill="none" stroke="#2d8bbd" strokeWidth="1.600" /></svg></div>
        <div className="flex w-[50px] items-center justify-center"><div className="flex size-[24px] items-center justify-center rounded-full bg-[#5865f2]"><FaDiscord className="size-[15px]" /></div></div>
        <div className="flex w-[47px] items-center justify-center border-b-2 border-[#76b9ed] bg-[#34484f]">
          <svg viewBox="0 0 26 26" className="mt-[2px] ml-[3px] size-[26px]"><circle cx="12" cy="12" r="11" fill="#34a853" /><path d="M12 12L2.500 6.500A11 11 0 0121.500 6.500z" fill="#ea4335" /><path d="M12 7h10a11 11 0 01-10 16l5-9z" fill="#fbbc04" /><circle cx="12" cy="12" r="5.200" fill="#fff" /><circle cx="12" cy="12" r="4.200" fill="#4285f4" /><circle cx="18.500" cy="18.500" r="7" fill="#ddd5d2" /><path d="M13 15l4 1-1 4 1 3-3-1zM17 13c4-1 6 1 7 4l-1 4-2-1-1-5z" fill="#241d1f" /><path d="M17 17h3v4l-2 1z" fill="#f0cfc4" /></svg>
        </div>
        <div className="ml-[6px] flex w-[40px] items-center justify-center border-b-2 border-[#76b9ed]"><svg viewBox="0 0 24 24" className="mt-[2px] size-[24px]"><path d="M17.500 0L6.800 10 2.500 6.500.5 7.500 5 12 .5 16.500l2 1L6.800 14l10.700 10 6-2.600V2.600zM17.500 17.500L10 12l7.500-5.500z" fill="#1f8fd8" /><path d="M17.500 0l6 2.600v18.800L17.500 24z" fill="#31a8f3" /></svg></div>
        <div className="ml-[9px] flex w-[40px] items-center justify-center border-b-2 border-[#76b9ed]"><svg viewBox="0 0 22 22" className="size-[22px]"><path d="M.5.5h21v21H.500z" fill="none" stroke="#fff" /><path d="M0 14l8-8 5 6 3-3 6 7v6H0z" fill="#fff" /></svg></div>
        <div className="ml-auto flex items-center">
          <Svg className="h-[7px] w-[12px]" vb="0 0 12 7" sw={1.300}><path d="M.5 6.500L6 .8l5.500 5.700" /></Svg>
          <Svg className="ml-[10px] h-[12px] w-[16px]" vb="0 0 16 12" sw={1}><path d="M4.500 4.500h10v6h-10M14.500 6.500h1v2h-1M1 2v3h3V2M1.500 0v2M3.500 0v2M2.500 5v5M6.500 5.500l4 4M10.500 5.500l-4 4" /></Svg>
          <Svg className="ml-[8px] h-[13px] w-[23px]" vb="0 0 23 13" sw={1}><path d="M.5.5h22v12H.5z" /><path d="M3 3.500h17M3 6.500h17" strokeDasharray="1.500 1" /><path d="M3 9.500h2M6 9.500h11M18 9.500h2" /></Svg>
          <T w={22} className="ml-[11px] text-[12px]">ENG</T>
          <div className="ml-[14px] flex w-[58px] flex-col items-center text-[12px] leading-[18px]"><T w={28}>09.24</T><T w={58}>05/11/2021</T></div>
          <div className="relative ml-[18px] h-[24px] w-[22px]">
            <svg viewBox="0 0 22 24" className="h-[24px] w-[22px]"><path d="M0 3h15v13H8l-4 3v-3H0z" fill="#fff" /><path d="M2.500 7h11M2.500 10h11M2.500 13h6" stroke="#001018" /></svg>
            <div className="absolute top-[9px] left-[7px] flex size-[16px] items-center justify-center rounded-full border border-[#777] bg-[#2a3138] text-[11px]">1</div>
          </div>
          <div className="ml-[14px] h-[38px] w-px bg-[#56626a]" />
          <div className="w-[4px]" />
        </div>
      </div>
    </div>
  );
}
